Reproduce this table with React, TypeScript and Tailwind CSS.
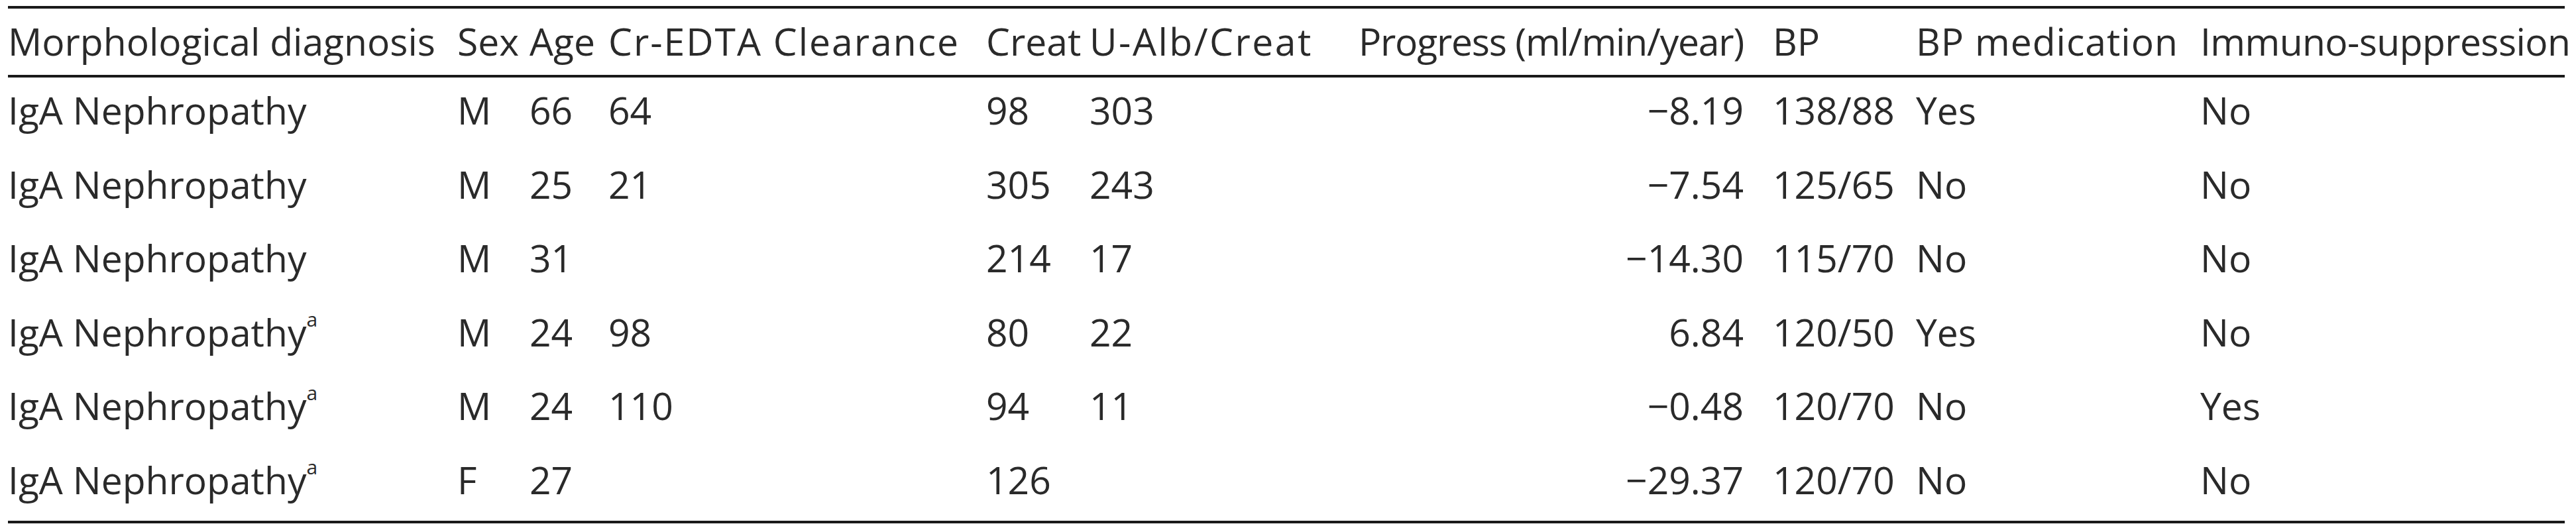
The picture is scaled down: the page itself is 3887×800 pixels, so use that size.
import React from "react";

type Row = {
  diag: string;
  sup?: boolean;
  sex: string;
  age: string;
  cr: string;
  creat: string;
  ualb: string;
  progress: string;
  bp: string;
  bpmed: string;
  immuno: string;
};

const rows: Row[] = [
  { diag: "IgA Nephropathy", sex: "M", age: "66", cr: "64", creat: "98", ualb: "303", progress: "\u22128.19", bp: "138/88", bpmed: "Yes", immuno: "No" },
  { diag: "IgA Nephropathy", sex: "M", age: "25", cr: "21", creat: "305", ualb: "243", progress: "\u22127.54", bp: "125/65", bpmed: "No", immuno: "No" },
  { diag: "IgA Nephropathy", sex: "M", age: "31", cr: "", creat: "214", ualb: "17", progress: "\u221214.30", bp: "115/70", bpmed: "No", immuno: "No" },
  { diag: "IgA Nephropathy", sup: true, sex: "M", age: "24", cr: "98", creat: "80", ualb: "22", progress: "6.84", bp: "120/50", bpmed: "Yes", immuno: "No" },
  { diag: "IgA Nephropathy", sup: true, sex: "M", age: "24", cr: "110", creat: "94", ualb: "11", progress: "\u22120.48", bp: "120/70", bpmed: "No", immuno: "Yes" },
  { diag: "IgA Nephropathy", sup: true, sex: "F", age: "27", cr: "", creat: "126", ualb: "", progress: "\u221229.37", bp: "120/70", bpmed: "No", immuno: "No" },
];

const gridCols =
  "grid grid-cols-[678px_109px_119px_570px_156px_399px_632px_216px_429px_550px] h-[76px] leading-[76px] whitespace-nowrap";

export default function App() {
  return (
    <div className="w-[3887px] h-[800px] bg-white pt-[9px] font-['Open_Sans',_'Noto_Sans',sans-serif] text-[57px] text-[#2a2a2a]">
      <div className="ml-[12px] w-[3858px] border-t-4 border-b-4 border-[#1a1a1a]">
        {/* Header */}
        <div className="pt-[11px] pb-[13px] border-b-4 border-[#1a1a1a]">
          <div className={gridCols}>
            <div>Morphological diagnosis</div>
            <div>Sex</div>
            <div>Age</div>
            <div className="tracking-[2px]">Cr-EDTA Clearance</div>
            <div>Creat</div>
            <div className="tracking-[2.5px]">U-Alb/Creat</div>
            <div className="text-right pr-[44px] tracking-[-1.2px]">Progress (ml/min/year)</div>
            <div>BP</div>
            <div className="tracking-[1px]">BP medication</div>
            <div className="tracking-[-0.6px]">Immuno-suppression</div>
          </div>
        </div>
        {/* Body */}
        <div className="pt-[11px] pb-[24px] flex flex-col gap-[35.6px]">
          {rows.map((r, i) => (
            <div key={i} className={gridCols}>
              <div>
                {r.diag}
                {r.sup && (
                  <span className="relative top-[-30px] text-[30px] leading-none">a</span>
                )}
              </div>
              <div>{r.sex}</div>
              <div>{r.age}</div>
              <div>{r.cr}</div>
              <div>{r.creat}</div>
              <div>{r.ualb}</div>
              <div className="text-right pr-[44px]">{r.progress}</div>
              <div>{r.bp}</div>
              <div>{r.bpmed}</div>
              <div>{r.immuno}</div>
            </div>
          ))}
        </div>
      </div>
    </div>
  );
}
